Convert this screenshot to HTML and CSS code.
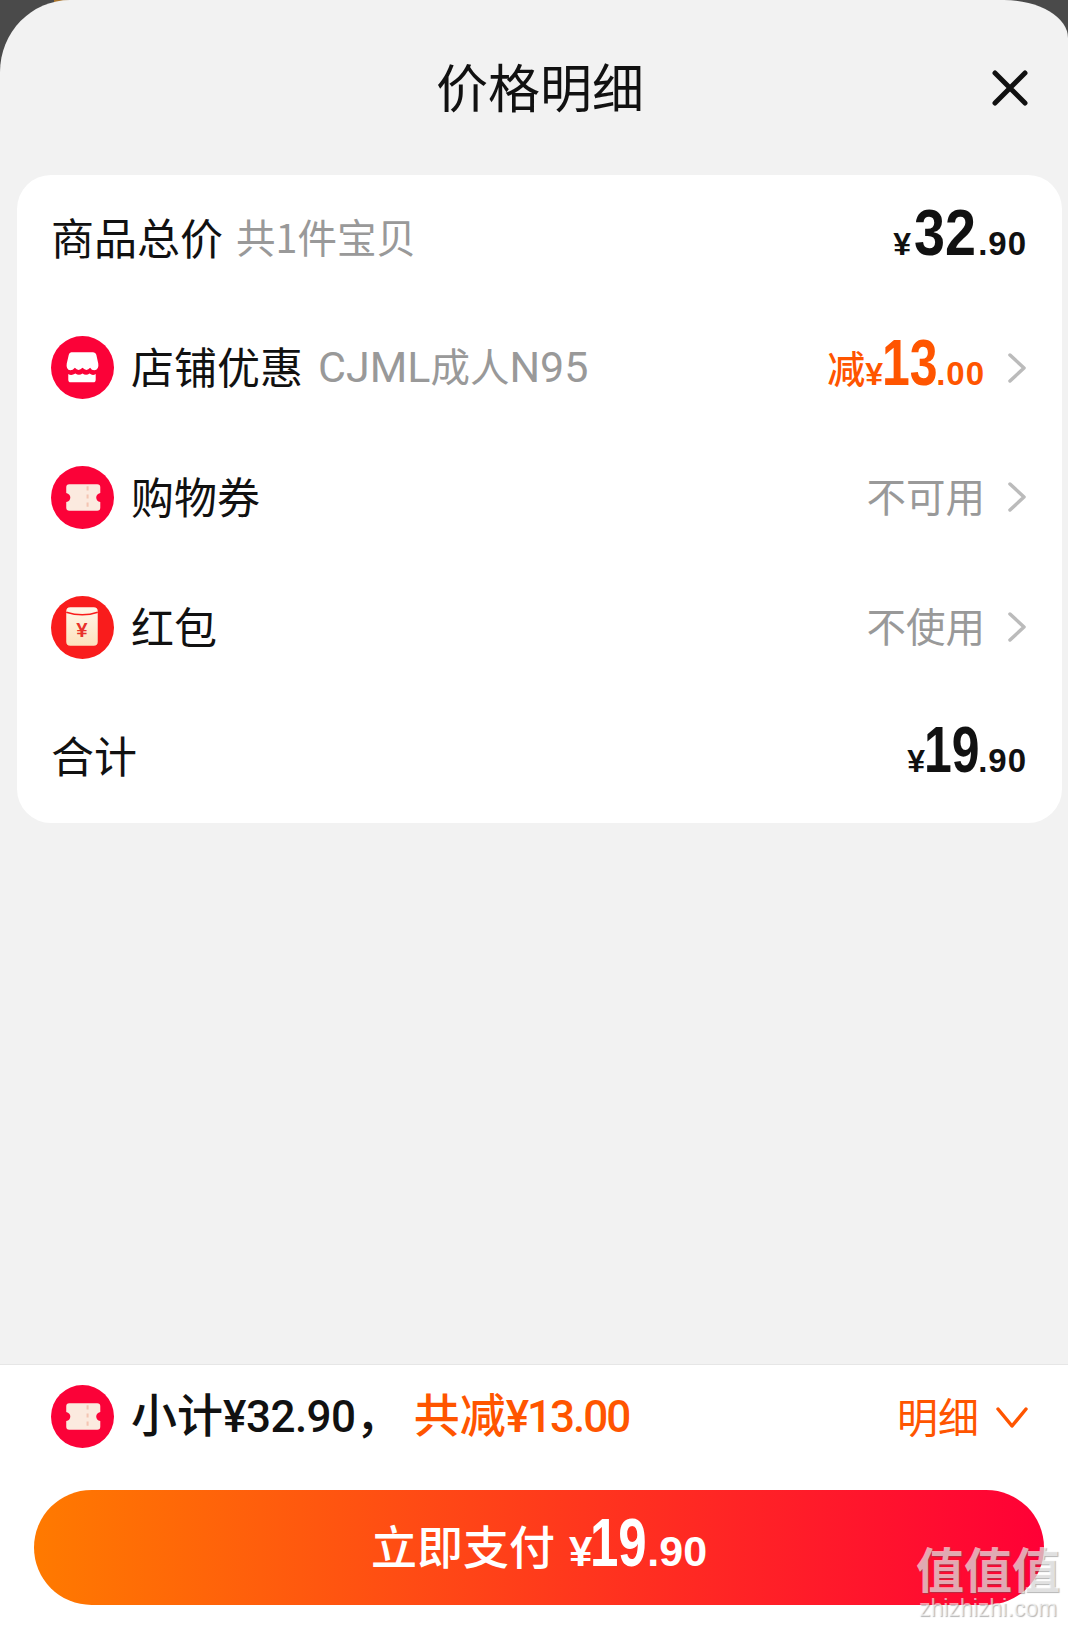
FILE: index.html
```html
<!DOCTYPE html>
<html lang="zh-CN">
<head>
<meta charset="utf-8">
<title>价格明细</title>
<link rel="stylesheet" href="styles.css">
</head>
<body>
<div class="screen">
  <span class="speck"></span>
  <main class="sheet">
    <header class="head">
      <h1 class="title">价格明细</h1>
      <svg class="close" viewBox="0 0 36 36"><path d="M3 3L33 33M33 3L3 33"/></svg>
    </header>
    <section class="card">
      <div class="row">
        <div class="left"><span class="label">商品总价</span><span class="sub">共1件宝贝</span></div>
        <div class="price price-end"><span class="yen">¥</span><span class="big">32</span><span class="cents">.90</span></div>
      </div>
      <div class="row row-icon">
        <div class="left">
          <svg class="ico" viewBox="0 0 62 62"><circle cx="31" cy="31" r="31" fill="#fb0238"/><path fill="#fff" d="M20 16H41.500Q44 16 44.600 18.500L46.500 27Q47.500 33 42.500 33.800Q40 33.800 38.500 31.300Q35 35.500 31 31.300Q27 35.500 23.500 31.300Q21.500 33.800 19 33.800Q14.500 33 15.500 27L17.500 18.500Q18 16 20 16Z"/><path fill="#fff" d="M17 37.500Q20 39.500 24 37Q27.500 39.500 31 37Q34.500 39.500 38 37Q41 39.500 44 37.500V43Q44 45.500 41.500 45.500H19.500Q17 45.500 17 43Z"/></svg>
          <span class="label">店铺优惠</span><span class="sub"><span class="latin">CJML</span>成人<span class="latin">N95</span></span>
        </div>
        <div class="right">
          <div class="price orange price-cut"><span class="jian">减</span><span class="yen">¥</span><span class="big big-one">13</span><span class="cents">.00</span></div>
          <svg class="chev" viewBox="0 0 18 30"><path d="M2 2L16 15L2 28"/></svg>
        </div>
      </div>
      <div class="row row-icon">
        <div class="left">
          <svg class="ico" viewBox="0 0 62 62"><circle cx="31" cy="31" r="31" fill="#fb0238"/><path fill="#fbeadf" d="M18 18H45.500Q48.500 18 48.500 21V26.500Q44.500 27.500 44.500 31Q44.500 34.500 48.500 35.500V41Q48.500 44 45.500 44H18Q15 44 15 41V35.500Q19 34.500 19 31Q19 27.500 15 26.500V21Q15 18 18 18Z"/><path class="perf" d="M36 20V42"/></svg>
          <span class="label">购物券</span>
        </div>
        <div class="right">
          <span class="val">不可用</span>
          <svg class="chev" viewBox="0 0 18 30"><path d="M2 2L16 15L2 28"/></svg>
        </div>
      </div>
      <div class="row row-icon">
        <div class="left">
          <svg class="ico" viewBox="0 0 62 62"><defs><linearGradient id="env" x1="0" y1="0" x2="0" y2="1"><stop offset="0" stop-color="#fff6ea"/><stop offset="1" stop-color="#fde2bd"/></linearGradient></defs><circle cx="31" cy="31" r="31" fill="#f91c1c"/><rect x="15" y="11" width="31" height="38" rx="4" fill="url(#env)"/><path class="flap" d="M15 16Q31 21 46 16"/><text class="env-yen" x="30.500" y="40">¥</text></svg>
          <span class="label">红包</span>
        </div>
        <div class="right">
          <span class="val">不使用</span>
          <svg class="chev" viewBox="0 0 18 30"><path d="M2 2L16 15L2 28"/></svg>
        </div>
      </div>
      <div class="row">
        <div class="left"><span class="label">合计</span></div>
        <div class="price price-end price-total"><span class="yen">¥</span><span class="big big-one">19</span><span class="cents">.90</span></div>
      </div>
    </section>
    <footer class="foot">
      <div class="summary">
        <div class="left">
          <svg class="ico" viewBox="0 0 62 62"><circle cx="31" cy="31" r="31" fill="#fb0238"/><path fill="#fbeadf" d="M18 18H45.500Q48.500 18 48.500 21V26.500Q44.500 27.500 44.500 31Q44.500 34.500 48.500 35.500V41Q48.500 44 45.500 44H18Q15 44 15 41V35.500Q19 34.500 19 31Q19 27.500 15 26.500V21Q15 18 18 18Z"/><path class="perf" d="M36 20V42"/></svg>
          <span class="sum-text">小计<span class="num">¥32.90</span>，</span>
          <span class="sum-text orange cut">共减<span class="num num-tight">¥13.00</span></span>
        </div>
        <div class="detail"><span class="detail-text">明细</span><svg class="chev-down" viewBox="0 0 32 22"><path d="M2 2L16 19L30 2"/></svg></div>
      </div>
      <button class="pay"><span class="pay-text">立即支付</span><span class="pay-yen">¥</span><span class="pay-big">19</span><span class="pay-cents">.90</span></button>
    </footer>
  </main>
  <div class="mark"><div class="mark-cn">值值值</div><div class="mark-en">zhizhizhi.com</div></div>
</div>
</body>
</html>
```

FILE: styles.css
```css
* { box-sizing: border-box; }
html, body { margin: 0; padding: 0; }
body {
  width: 1068px;
  height: 1627px;
  overflow: hidden;
  background: #4a4a4a;
  font-family: "Noto Sans CJK SC", "Noto Sans", sans-serif;
  color: #111;
}
.screen { position: relative; width: 1068px; height: 1627px; overflow: hidden; }
.speck { position: absolute; left: 54px; top: 0; width: 16px; height: 2px; background: #a8732c; }
.sheet {
  position: relative;
  height: 1627px;
  display: flex;
  flex-direction: column;
  background: #f2f2f2;
  border-radius: 70px 64px 0 0 / 72px 38px 0 0;
  overflow: hidden;
}
.head { position: relative; height: 175px; flex: none; display: flex; justify-content: center; padding-left: 12px; }
.title { margin: 54px 0 0; font-size: 52px; line-height: 64px; font-weight: 400; color: #111; }
.close { position: absolute; left: 992px; top: 70px; width: 36px; height: 36px; }
.close path { fill: none; stroke: #111; stroke-width: 5; stroke-linecap: round; }

.card {
  flex: none;
  height: 648px;
  margin: 0 6px 0 17px;
  padding: 0 35px 0 34px;
  background: #fff;
  border-radius: 34px;
  display: flex;
  flex-direction: column;
}
.row { flex: 1; display: flex; align-items: center; justify-content: space-between; }
.left { display: flex; align-items: center; }
.right { display: flex; align-items: center; }
.ico { width: 63px; height: 63px; flex: none; margin-bottom: 3px; }
.label { font-size: 43px; line-height: 56px; padding-bottom: 8px; color: #111; }
.row-icon .label { margin-left: 17px; }
.sub { font-size: 39.500px; line-height: 56px; padding-bottom: 8px; color: #999; margin-left: 13px; }
.row-icon .sub { margin-left: 15px; }
.latin { font-family: "Roboto", sans-serif; font-size: 43px; line-height: 1; }
.val { font-size: 39.500px; line-height: 56px; padding-bottom: 8px; color: #999; }
.price { display: flex; align-items: baseline; font-family: "Liberation Sans", sans-serif; font-weight: 700; color: #111; line-height: 64px; }
.price.orange { color: #ff5500; }
.price-end { margin-bottom: 2px; }
.price-cut { margin-bottom: 2px; }
.price-total { margin-bottom: 6px; }
.yen { font-size: 32px; }
.big { display: inline-block; width: 62px; margin-left: 3px; font-size: 64px; transform: scaleX(0.87); transform-origin: left center; white-space: nowrap; }
.big-one { width: 52px; margin-left: -1px; transform: scaleX(0.78); }
.cents { font-size: 33px; letter-spacing: 1px; margin-left: 2px; }
.jian { font-family: "Noto Sans CJK SC", sans-serif; font-size: 38px; font-weight: 500; transform: translateY(-2px); }
.orange { color: #ff5500; }
.chev { width: 18px; height: 30px; margin-left: 23px; flex: none; margin-bottom: 3px; margin-right: 1px; }
.chev path { fill: none; stroke: #bbb; stroke-width: 3.500; stroke-linecap: round; stroke-linejoin: round; }
.perf { fill: none; stroke: #f4c4b2; stroke-width: 2; stroke-dasharray: 4 4; }
.flap { fill: none; stroke: #f91c1c; stroke-width: 1.500; }
.env-yen { font-family: "Liberation Sans", sans-serif; font-size: 20px; font-weight: 700; fill: #e8322c; text-anchor: middle; }

.foot {
  margin-top: auto;
  height: 263px;
  flex: none;
  background: #fff;
  border-top: 1px solid #e6e6e6;
  display: flex;
  flex-direction: column;
}
.summary {
  height: 103px;
  flex: none;
  padding: 0 40px 0 51px;
  display: flex;
  align-items: center;
  justify-content: space-between;
}
.summary .ico { margin-bottom: 1px; }
.sum-text { font-size: 46px; line-height: 60px; padding-bottom: 4px; font-weight: 500; margin-left: 17px; white-space: nowrap; }
.num { font-family: "Roboto", sans-serif; font-size: 44px; font-weight: 500; letter-spacing: -0.5px; }
.num-tight { letter-spacing: -2px; }
.cut { margin-left: 12px; }
.detail { display: flex; align-items: center; color: #ff5500; }
.detail-text { font-size: 41px; line-height: 56px; padding-bottom: 4px; }
.chev-down { width: 32px; height: 22px; margin-left: 17px; margin-top: 2px; }
.chev-down path { fill: none; stroke: #ff5500; stroke-width: 3.500; stroke-linecap: round; stroke-linejoin: round; }
.pay {
  height: 115px;
  margin: 22px 24px 0 34px;
  padding: 0;
  border: 0;
  border-radius: 58px;
  background: linear-gradient(90deg, #ff7a00 0%, #ff2f20 60%, #ff0036 100%);
  color: #fff;
  display: flex;
  align-items: baseline;
  justify-content: center;
  line-height: 104px;
  font-family: "Noto Sans CJK SC", sans-serif;
}
.pay-text { font-size: 46px; font-weight: 500; margin-right: 14px; transform: translateY(-2px); }
.pay-yen, .pay-big, .pay-cents { font-family: "Liberation Sans", sans-serif; font-weight: 700; }
.pay-yen { font-size: 42px; }
.pay-big { display: inline-block; width: 57px; margin-left: -2px; font-size: 68px; transform: scaleX(0.75); transform-origin: left center; white-space: nowrap; }
.pay-cents { font-size: 43px; }

.mark { position: absolute; left: 913px; top: 1539px; width: 150px; text-align: center; color: rgba(255, 255, 255, 0.62); text-shadow: 1px 1px 1px rgba(90, 90, 90, 0.45); }
.mark-cn { font-size: 48px; line-height: 56px; font-weight: 700; white-space: nowrap; }
.mark-en { font-family: "Liberation Sans", sans-serif; font-size: 23px; line-height: 24px; margin-top: 1px; white-space: nowrap; }
```
